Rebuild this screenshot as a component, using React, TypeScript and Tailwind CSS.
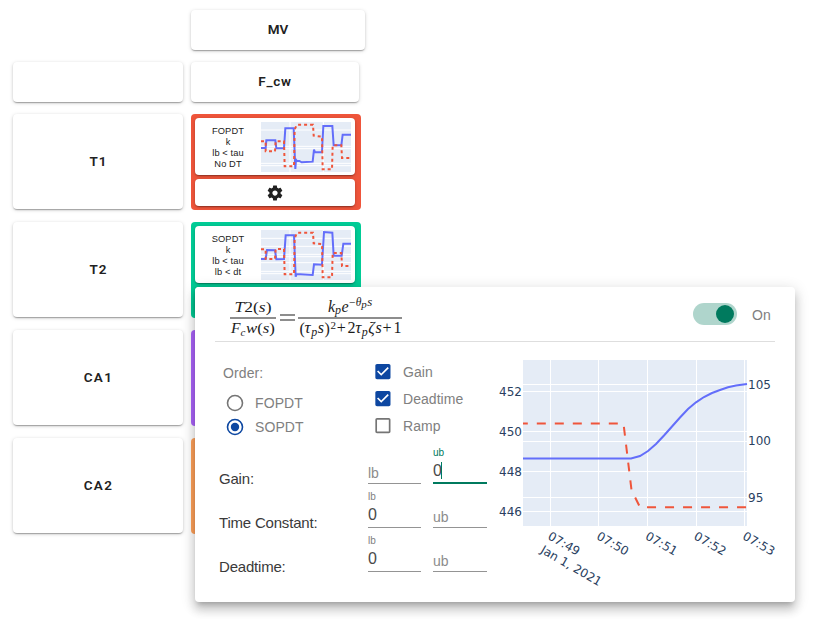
import React from 'react';

const paper =
  'rounded bg-white shadow-[0px_2px_1px_-1px_rgba(0,0,0,0.2),0px_1px_2px_0px_rgba(0,0,0,0.16),0px_1px_4px_0px_rgba(0,0,0,0.14)]';

const label = 'flex items-center justify-center font-[Roboto,sans-serif] text-[13.5px] font-semibold text-[#212121]';

type Trend = { blue: string; red: string; grid: number[] };

const trends: Record<string, Trend> = {
  T1: {
    blue: '0,78 14,78 16,55 43,55 46,79 69,79 73,19 98,19 103,141 105,113 108,117 115,117 122,121 155,119 159,83 162,91 183,91 187,12 214,12 218,70 241,70 245,38 270,38',
    red: '0,58 14,58 14,88 42,88 44,58 69,58 71,133 99,133 101,22 108,8 156,8 158,41 183,44 185,142 213,142 215,70 241,70 243,108 270,108',
    grid: [24, 73, 80, 124, 131],
  },
  T2: {
    blue: '0,87 14,87 18,60 42,61 46,88 69,87 74,16 99,16 104,140 107,132 155,135 159,103 183,104 189,6 214,8 218,77 242,77 247,41 270,41',
    red: '0,58 14,58 14,87 42,87 44,57 69,57 71,133 99,133 101,25 108,8 156,8 158,40 183,42 185,142 213,142 215,69 241,69 243,108 270,108',
    grid: [25, 49, 73, 80, 98, 124, 131],
  },
};

function MiniTrend({ trend }: { trend: Trend }) {
  return (
    <svg className="h-[50px] w-[90px] bg-[#e5ecf6]" viewBox="0 0 270 150">
      {trend.grid.map((y) => (
        <line key={y} x1="0" x2="270" y1={y} y2={y} stroke="#fff" strokeWidth="3" />
      ))}
      {[87, 187].map((x) => (
        <line key={x} x1={x} x2={x} y1="0" y2="150" stroke="#fff" strokeWidth="3" />
      ))}
      <polyline points={trend.blue} fill="none" stroke="#636efa" strokeWidth="6" />
      <polyline points={trend.red} fill="none" stroke="#ef553b" strokeWidth="6" strokeDasharray="9 9" />
    </svg>
  );
}

function ModelCell({ color, lines, trend }: { color: string; lines?: string[]; trend?: Trend }) {
  return (
    <div className={`flex h-24 w-[170px] flex-col gap-1 rounded p-1 ${color}`}>
      {lines && trend && (
        <>
          <div className={`flex h-[57px] w-40 items-center ${paper}`}>
            <div className="w-[66px] pt-0.5 text-center text-[9.3px] leading-[11px] tracking-[0.1px] text-[#212121]">
              {lines.map((l) => (
                <div key={l}>{l}</div>
              ))}
            </div>
            <MiniTrend trend={trend} />
          </div>
          <div className={`flex h-[27px] w-40 items-center justify-center ${paper}`}>
            <svg viewBox="0 0 24 24" className="h-[18px] w-[18px]" fill="#212121">
              <path d="M19.43 12.98c.04-.32.07-.64.07-.98s-.03-.66-.07-.98l2.11-1.65c.19-.15.24-.42.12-.64l-2-3.46c-.12-.22-.39-.3-.61-.22l-2.49 1c-.52-.4-1.08-.73-1.69-.98l-.38-2.65C14.46 2.18 14.25 2 14 2h-4c-.25 0-.46.18-.49.42l-.38 2.65c-.61.25-1.17.59-1.69.98l-2.49-1c-.23-.09-.49 0-.61.22l-2 3.46c-.13.22-.07.49.12.64l2.11 1.65c-.04.32-.07.65-.07.98s.03.66.07.98l-2.11 1.65c-.19.15-.24.42-.12.64l2 3.46c.12.22.39.3.61.22l2.49-1c.52.4 1.08.73 1.69.98l.38 2.65c.03.24.24.42.49.42h4c.25 0 .46-.18.49-.42l.38-2.65c.61-.25 1.17-.59 1.69-.98l2.49 1c.23.09.49 0 .61-.22l2-3.46c.12-.22.07-.49-.12-.64l-2.11-1.65zM12 15.5c-1.93 0-3.5-1.57-3.5-3.5s1.57-3.5 3.5-3.5 3.5 1.57 3.5 3.5-1.57 3.5-3.5 3.5z" />
            </svg>
          </div>
        </>
      )}
    </div>
  );
}

function Equation() {
  return (
    <svg width="176" height="44" viewBox="229 296 176 44" className="mt-[7px] overflow-visible font-['Liberation_Serif',serif] italic" fill="#1c1c1c">
      <text x="234.5" y="312" fontSize="15.5" textLength="37" lengthAdjust="spacingAndGlyphs">
        T<tspan fontStyle="normal">2(</tspan>s<tspan fontStyle="normal">)</tspan>
      </text>
      <rect x="230" y="317.5" width="46" height="1" />
      <text x="231" y="333" fontSize="15.5">F</text>
      <text x="240.5" y="335.5" fontSize="11">c</text>
      <text x="246" y="333" fontSize="15.5" textLength="29" lengthAdjust="spacingAndGlyphs">
        w<tspan fontStyle="normal">(</tspan>s<tspan fontStyle="normal">)</tspan>
      </text>
      <rect x="280" y="314.5" width="15" height="1" />
      <rect x="280" y="319.5" width="15" height="1" />
      <rect x="298" y="317.5" width="104" height="1" />
      <text x="328" y="311.5" fontSize="16">k</text>
      <text x="335" y="314" fontSize="12">p</text>
      <text x="341.5" y="311.5" fontSize="16">e</text>
      <text x="349" y="306" fontSize="11.5" fontStyle="normal">−</text>
      <text x="355.8" y="305.5" fontSize="11.5">θ</text>
      <text x="361.3" y="308" fontSize="11">p</text>
      <text x="367.3" y="305.5" fontSize="11.5" textLength="5" lengthAdjust="spacingAndGlyphs">s</text>
      <text x="299.5" y="333.5" fontSize="16" fontStyle="normal">(</text>
      <text x="304.5" y="333" fontSize="17">τ</text>
      <text x="311.3" y="335.5" fontSize="12">p</text>
      <text x="317.8" y="333" fontSize="16">s</text>
      <text x="324.5" y="333.5" fontSize="16" fontStyle="normal">)</text>
      <text x="330.5" y="328.5" fontSize="11" fontStyle="normal">2</text>
      <text x="336.7" y="333" fontSize="16" fontStyle="normal">+</text>
      <text x="347.5" y="333" fontSize="16" fontStyle="normal">2</text>
      <text x="355.3" y="333" fontSize="17">τ</text>
      <text x="361.8" y="335.5" fontSize="12">p</text>
      <text x="368.3" y="333" fontSize="16">ζ</text>
      <text x="375.5" y="333" fontSize="16">s</text>
      <text x="382.5" y="333" fontSize="16" fontStyle="normal">+</text>
      <text x="393.5" y="333" fontSize="16" fontStyle="normal">1</text>
    </svg>
  );
}

function Radio({ on, text }: { on?: boolean; text: string }) {
  return (
    <div className="flex h-6 items-center gap-[11px]">
      <svg width="18" height="18" viewBox="0 0 18 18" className="overflow-visible" fill="none">
        <circle cx="9" cy="9" r="7.5" stroke={on ? '#0d47a1' : '#757575'} strokeWidth="1.6" />
        {on && <circle cx="9" cy="9" r="4.2" fill="#0d47a1" />}
      </svg>
      <span className="pt-px text-[14px] tracking-[0.1px] text-[#808080]">{text}</span>
    </div>
  );
}

function Check({ on, text }: { on?: boolean; text: string }) {
  return (
    <div className="flex h-[27px] items-center gap-3">
      <svg width="16" height="16" viewBox="2.6 3 19 19">
        <path
          fill={on ? '#0d47a1' : '#757575'}
          d={
            on
              ? 'M19 3H5c-1.11 0-2 .9-2 2v14c0 1.1.89 2 2 2h14c1.11 0 2-.9 2-2V5c0-1.1-.89-2-2-2zm-9 14l-5-5 1.41-1.41L10 14.17l7.59-7.59L19 8l-9 9z'
              : 'M19 5v14H5V5h14m0-2H5c-1.1 0-2 .9-2 2v14c0 1.1.9 2 2 2h14c1.1 0 2-.9 2-2V5c0-1.1-.9-2-2-2z'
          }
        />
      </svg>
      <span className="pt-0.5 text-[14px] tracking-[0.05px] text-[#808080]">{text}</span>
    </div>
  );
}

function Field({ name, value, active }: { name: string; value?: string; active?: boolean }) {
  const border = active ? 'border-b-2 border-[#007a5e]' : 'border-b border-[#949494]';
  return (
    <div className={`flex h-[38px] flex-col justify-end ${name === 'lb' ? 'w-[53px]' : 'w-[54px]'} ${border}`}>
      {value === undefined ? (
        <span className="pb-px text-[14px] leading-[18px] text-[#8c8c8c]">{name}</span>
      ) : (
        <>
          <span className={`text-[10px] leading-3 ${active ? 'text-[#007a5e]' : 'text-[#808080]'}`}>{name}</span>
          <span className={`flex items-center text-[16px] leading-[18px] text-[#4a4a4a] ${active ? 'h-[23px]' : 'h-6'}`}>
            {value}
            {active && <span className="-ml-px h-[17px] w-px bg-[#007a5e]" />}
          </span>
        </>
      )}
    </div>
  );
}

function BoundsRow({ title, lb, ub, active }: { title: string; lb?: string; ub?: string; active?: boolean }) {
  return (
    <div className="flex h-11 items-end">
      <span className="w-[149px] text-[15px] leading-[10px] tracking-[-0.2px] text-[#3a3a3a]">{title}</span>
      <Field name="lb" value={lb} />
      <div className="w-3" />
      <Field name="ub" value={ub} active={active} />
    </div>
  );
}

function ResponseChart() {
  return (
    <svg width="282" height="240" viewBox="495 355 282 240" className="shrink-0 overflow-visible font-['DejaVu_Sans',sans-serif] text-[12px]" fill="#2a3f5f">
      <rect x="523" y="360" width="224" height="166" fill="#e5ecf6" />
      <g stroke="#fff">
        {[550.5, 598.5, 647.5, 696.5, 744.5].map((x) => (
          <line key={x} x1={x} x2={x} y1="360" y2="526" />
        ))}
        {[391.5, 431.5, 471.5, 511.5, 384.5, 441.5, 497.5].map((y) => (
          <line key={y} x1="523" x2="747" y1={y} y2={y} />
        ))}
      </g>
      <polyline
        points="523,458.5 631,458.5 640,456 648,451 656,444 664,435.5 672,426.5 680,417.5 688,409 696,402.3 704,397 712,393 720,390 728,387.3 736,385.5 747,384"
        fill="none"
        stroke="#636efa"
        strokeWidth="2"
      />
      <polyline
        points="523,423.5 623.5,423.5 631.5,490 640,507.3 747,507.3"
        fill="none"
        stroke="#ef553b"
        strokeWidth="2"
        strokeDasharray="9 9"
        strokeDashoffset="4.2"
      />
      {[452, 450, 448, 446].map((v, i) => (
        <text key={v} x="522" y={396 + i * 40} textAnchor="end">{v}</text>
      ))}
      <text x="748" y="389">105</text>
      <text x="748" y="445">100</text>
      <text x="748" y="502">95</text>
      {['07:49', '07:50', '07:51', '07:52', '07:53'].map((t, i) => (
        <text key={t} transform={`translate(${547 + i * 48.7} 538.5) rotate(30)`}>
          {t}
          {i === 0 && (
            <tspan x="0.5" dy="15.6">Jan 1, 2021</tspan>
          )}
        </text>
      ))}
    </svg>
  );
}

function ModelDialog() {
  return (
    <div className="absolute left-[195px] top-[287px] h-[315px] w-[600px] rounded bg-white px-5 shadow-[0px_5px_5px_-3px_rgba(0,0,0,0.2),0px_8px_10px_1px_rgba(0,0,0,0.14),0px_3px_14px_2px_rgba(0,0,0,0.12)]">
      <div className="flex h-[55px] items-center justify-between border-b border-[#dedede] pl-[14px] pr-1">
        <Equation />
        <div className="flex items-center gap-[15px]">
          <div className="flex h-[22px] w-11 items-center justify-end rounded-full bg-[#afd5cc] pr-[3px]">
            <div className="h-[18px] w-[18px] rounded-full bg-[#007a5e]" />
          </div>
          <span className="pt-0.5 text-[14px] tracking-[0.15px] text-[#808080]">On</span>
        </div>
      </div>
      <div className="flex">
        <div className="w-[280px] shrink-0 pl-1 pt-4">
          <div className="flex h-[82px]">
            <div className="w-[156px] pl-1">
              <div className="pb-[8px] pt-[5px] text-[14px] leading-[20px] tracking-[0.1px] text-[#808080]">Order:</div>
              <div className="pl-[3px]">
                <Radio text="FOPDT" />
                <Radio text="SOPDT" on />
              </div>
            </div>
            <div>
              <Check text="Gain" on />
              <Check text="Deadtime" on />
              <Check text="Ramp" />
            </div>
          </div>
          <div>
            <BoundsRow title="Gain:" ub="0" active />
            <BoundsRow title="Time Constant:" lb="0" />
            <BoundsRow title="Deadtime:" lb="0" />
          </div>
        </div>
        <div className="shrink-0 pt-[13px]">
          <ResponseChart />
        </div>
      </div>
    </div>
  );
}

export default function App() {
  const wide = `${label} ${paper}`;
  return (
    <div className="relative h-[619px] w-[819px] overflow-hidden bg-white font-['Liberation_Sans',Arial,sans-serif]">
      <div className="flex flex-col gap-3 pl-[13px] pt-[10px]">
        <div className={`ml-[178px] h-10 w-[174px] pb-0.5 ${wide}`}>MV</div>
        <div className="flex gap-2">
          <div className={`h-10 w-[170px] ${paper}`} />
          <div className={`h-10 w-[168px] pb-0.5 tracking-[0.8px] ${wide}`}>F_cw</div>
        </div>
        <div className="flex gap-2">
          <div className={`h-[95px] w-[170px] pl-px tracking-[1.1px] ${wide}`}>T1</div>
          <ModelCell color="bg-[#ef553b]" lines={['FOPDT', 'k', 'lb < tau', 'No DT']} trend={trends.T1} />
        </div>
        <div className="flex gap-2">
          <div className={`h-[95px] w-[170px] pl-px tracking-[1.1px] ${wide}`}>T2</div>
          <ModelCell color="bg-[#00cc96]" lines={['SOPDT', 'k', 'lb < tau', 'lb < dt']} trend={trends.T2} />
        </div>
        <div className="flex gap-2">
          <div className={`h-[95px] w-[170px] pl-px tracking-[1.4px] ${wide}`}>CA1</div>
          <ModelCell color="bg-[#ab63fa]" />
        </div>
        <div className="flex gap-2">
          <div className={`h-[95px] w-[170px] pl-px tracking-[1.4px] ${wide}`}>CA2</div>
          <ModelCell color="bg-[#ffa15a]" />
        </div>
      </div>
      <ModelDialog />
    </div>
  );
}
